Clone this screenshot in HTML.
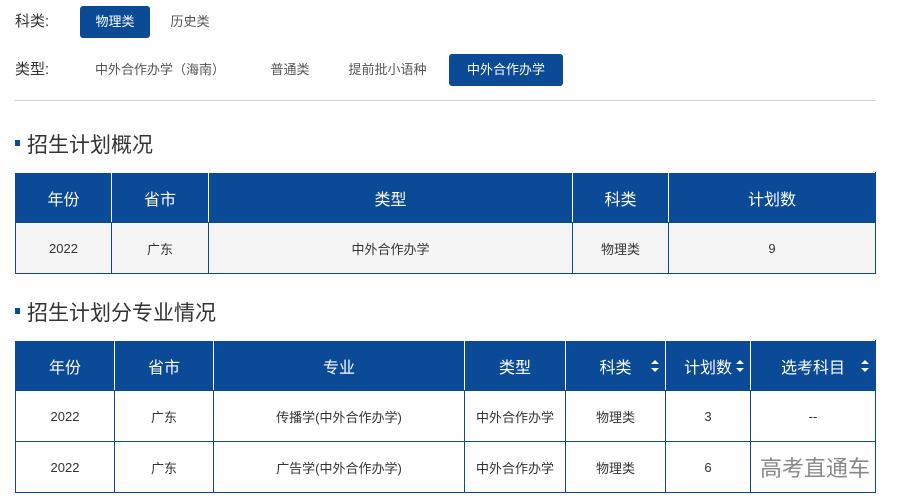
<!DOCTYPE html>
<html><head><meta charset="utf-8"><style>
*{margin:0;padding:0;box-sizing:border-box}
body{width:897px;height:501px;background:#fff;font-family:"Liberation Sans","Noto Sans CJK SC",sans-serif;color:#333;position:relative;overflow:hidden}
.abs{position:absolute}
.lbl{font-size:15px;color:#333}
.btn{position:absolute;height:32px;line-height:32px;font-size:13px;color:#555;text-align:center}
.btn.on{background:#0b4a97;color:#fff;border-radius:3px}
.h{position:absolute;left:15px;font-size:21px;color:#333}
.h:before{content:"";display:inline-block;width:5px;height:6px;background:#0b4a97;margin-right:7px;vertical-align:middle;position:relative;top:-3px}
table{position:absolute;left:15px;width:861px;border-collapse:collapse;table-layout:fixed}
td,th{border:1px solid #0b4a97;text-align:center;font-size:13px;color:#333}
th{background:#0b4a97;color:#fff;font-weight:normal;font-size:16px;border-color:#fff #fff #0b4a97 #fff;position:relative}
th:first-child{border-left-color:#0b4a97}th:last-child{border-right-color:#0b4a97}
.s:after{content:"";position:absolute;right:6px;top:19px;border:4px solid transparent;border-bottom:4px solid #fff;border-top:0}
.s:before{content:"";position:absolute;right:6px;top:27px;border:4px solid transparent;border-top:4px solid #fff;border-bottom:0}
</style></head><body>
<div class="abs lbl" style="left:15px;top:10px">科类:</div>
<div class="btn on" style="left:80px;top:6px;width:70px">物理类</div>
<div class="btn" style="left:155px;top:6px;width:70px">历史类</div>
<div class="abs lbl" style="left:15px;top:58px">类型:</div>
<div class="btn" style="left:85px;top:54px;width:150px">中外合作办学（海南）</div>
<div class="btn" style="left:255px;top:54px;width:70px">普通类</div>
<div class="btn" style="left:335px;top:54px;width:105px">提前批小语种</div>
<div class="btn on" style="left:449px;top:54px;width:114px">中外合作办学</div>
<div class="abs" style="left:14px;top:100px;width:862px;height:1px;background:#d5d5d5"></div>
<div class="h" style="top:129px">招生计划概况</div>
<table style="top:172px">
<colgroup><col style="width:96px"><col style="width:97px"><col style="width:364px"><col style="width:96px"><col></colgroup>
<tr style="height:50px"><th>年份</th><th>省市</th><th>类型</th><th>科类</th><th>计划数</th></tr>
<tr style="height:51px;background:#f5f5f5"><td>2022</td><td>广东</td><td>中外合作办学</td><td>物理类</td><td>9</td></tr>
</table>
<div class="h" style="top:297px">招生计划分专业情况</div>
<table style="top:340px">
<colgroup><col style="width:99px"><col style="width:99px"><col style="width:251px"><col style="width:101px"><col style="width:100px"><col style="width:85px"><col></colgroup>
<tr style="height:50px"><th>年份</th><th>省市</th><th>专业</th><th>类型</th><th class="s">科类</th><th class="s">计划数</th><th class="s">选考科目</th></tr>
<tr style="height:51px"><td>2022</td><td>广东</td><td>传播学(中外合作办学)</td><td>中外合作办学</td><td>物理类</td><td>3</td><td>--</td></tr>
<tr style="height:51px"><td>2022</td><td>广东</td><td>广告学(中外合作办学)</td><td>中外合作办学</td><td>物理类</td><td>6</td><td style="font-size:22px;color:#888;padding-left:4px">高考直通车</td></tr>
</table>
</body></html>
